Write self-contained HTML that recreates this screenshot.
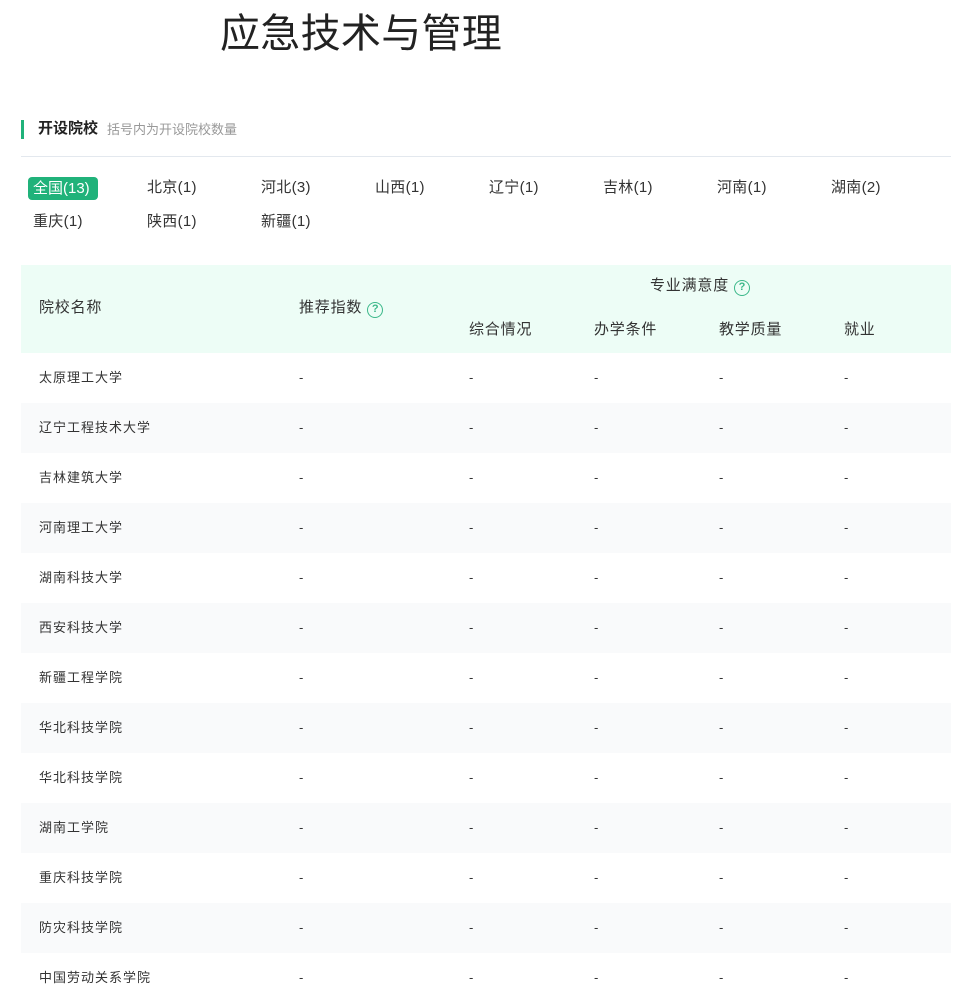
<!DOCTYPE html>
<html><head><meta charset="utf-8"><style>
*{margin:0;padding:0;box-sizing:border-box}
body{width:960px;height:1008px;background:#fff;font-family:"Liberation Sans","Noto Sans CJK SC",sans-serif;color:#333;position:relative;overflow:hidden}
.a{position:absolute;white-space:nowrap}
.title{left:220px;top:9px;font-size:40px;line-height:50px;color:#222;letter-spacing:0.3px}
.bar{left:21px;top:120px;width:3px;height:19px;background:#20b27a}
.sh{left:38px;top:119px;font-size:15px;font-weight:bold;color:#222;line-height:20px}
.ss{left:107px;top:121px;font-size:13px;color:#999;line-height:18px}
.hr{left:21px;top:156px;width:930px;height:1px;background:#e3e8ee}
.tab{font-size:15px;line-height:20px;color:#333;letter-spacing:0.3px}
.pill{left:28px;top:177px;width:70px;height:23px;background:#20b27a;border-radius:4px;color:#fff;font-size:15px;line-height:23px;padding-left:5px}
.th{left:21px;top:265px;width:930px;height:88px;background:#edfdf6}
.hd{font-size:15px;color:#333;line-height:20px;letter-spacing:0.8px}
.q{display:inline-block;width:16px;height:16px;border:1.5px solid #3cb88a;border-radius:50%;color:#3cb88a;font-size:11px;line-height:13px;text-align:center;vertical-align:0px;margin-left:5px;font-weight:bold;letter-spacing:0}
.row{left:21px;width:930px;height:50px}
.row.alt{background:#f9fafb}
.c{font-size:13px;line-height:20px;color:#333;letter-spacing:1px}
</style></head><body>
<div class="a title">应急技术与管理</div>
<div class="a bar"></div>
<div class="a sh">开设院校</div>
<div class="a ss">括号内为开设院校数量</div>
<div class="a hr"></div>
<div class="a pill">全国(13)</div>
<div class="a tab" style="left:147px;top:178px">北京(1)</div>
<div class="a tab" style="left:261px;top:178px">河北(3)</div>
<div class="a tab" style="left:375px;top:178px">山西(1)</div>
<div class="a tab" style="left:489px;top:178px">辽宁(1)</div>
<div class="a tab" style="left:603px;top:178px">吉林(1)</div>
<div class="a tab" style="left:717px;top:178px">河南(1)</div>
<div class="a tab" style="left:831px;top:178px">湖南(2)</div>
<div class="a tab" style="left:33px;top:212px">重庆(1)</div>
<div class="a tab" style="left:147px;top:212px">陕西(1)</div>
<div class="a tab" style="left:261px;top:212px">新疆(1)</div>
<div class="a th"></div>
<div class="a hd" style="left:39px;top:298px">院校名称</div>
<div class="a hd" style="left:299px;top:298px">推荐指数<span class="q">?</span></div>
<div class="a hd" style="left:650px;top:276px">专业满意度<span class="q">?</span></div>
<div class="a hd" style="left:469px;top:320px">综合情况</div>
<div class="a hd" style="left:594px;top:320px">办学条件</div>
<div class="a hd" style="left:719px;top:320px">教学质量</div>
<div class="a hd" style="left:844px;top:320px">就业</div>
<div id="rows"></div>
<script>
var n=["太原理工大学","辽宁工程技术大学","吉林建筑大学","河南理工大学","湖南科技大学","西安科技大学","新疆工程学院","华北科技学院","华北科技学院","湖南工学院","重庆科技学院","防灾科技学院","中国劳动关系学院"];
var h="";
n.forEach(function(s,i){var t=353+i*50;
h+='<div class="a row'+(i%2?' alt':'')+'" style="top:'+t+'px"></div>';
h+='<div class="a c" style="left:39px;top:'+(t+15)+'px">'+s+'</div>';
[299,469,594,719,844].forEach(function(x){h+='<div class="a c" style="left:'+x+'px;top:'+(t+15)+'px">-</div>';});
});
document.getElementById("rows").innerHTML=h;
</script>
</body></html>
